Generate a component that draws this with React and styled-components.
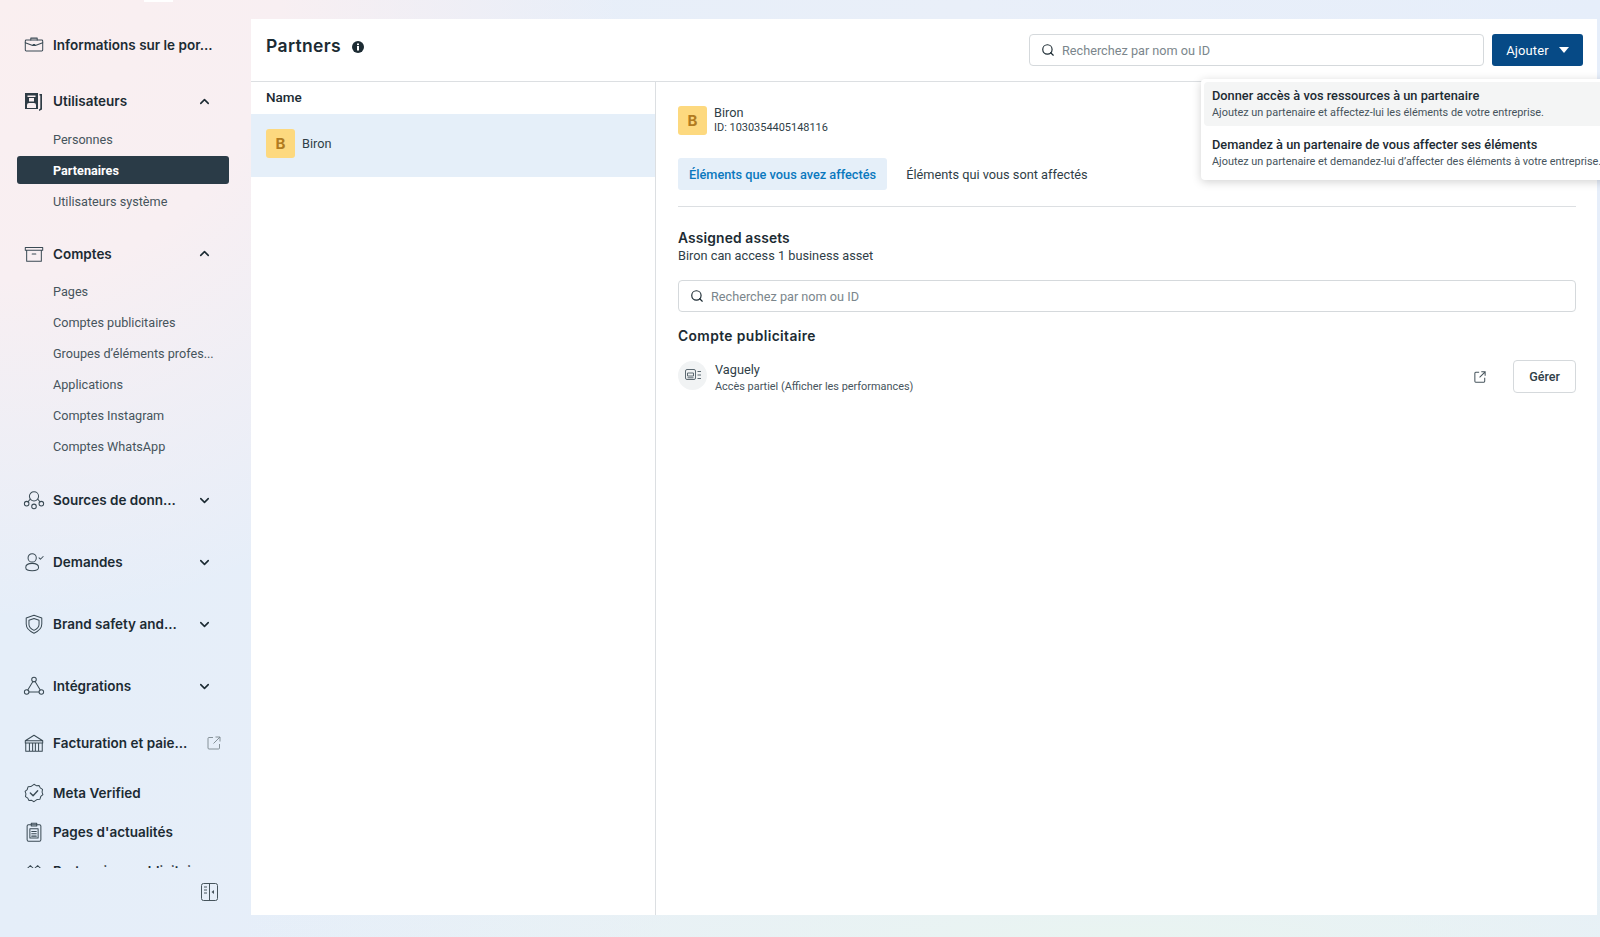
import styled, { createGlobalStyle } from "styled-components";
import { ChevronUp, ChevronDown, Search } from "lucide-react";

const GlobalStyle = createGlobalStyle`
  html, body {
    margin: 0;
    height: 100%;
    overflow: hidden;
  }
  body {
    font-family: Roboto, "Liberation Sans", sans-serif;
    color: #1c2b33;
  }
  * {
    box-sizing: border-box;
  }
`;

const Page = styled.div`
  position: relative;
  display: flex;
  width: 100vw;
  height: 100vh;
  padding: 19px 3px 22px 0;
  background:
    radial-gradient(900px 120px at 70% 100%, #e9f4f1 0%, rgba(233, 244, 241, 0) 100%),
    radial-gradient(620px 620px at 0% 0%, #faeff0 0%, #f8eff2 45%, rgba(248, 239, 242, 0) 100%),
    linear-gradient(90deg, #e5eef9 0%, #e9eff9 60%, #e6eefa 100%);
  background-color: #e5eef9;
`;

const TopTab = styled.div`
  position: absolute;
  top: 0;
  left: 144px;
  width: 29px;
  height: 2px;
  background: #fff;
`;

const Sidebar = styled.aside`
  width: 251px;
  margin: -19px 0 -22px;
  flex-shrink: 0;
  display: flex;
  flex-direction: column;
`;

const NavScroll = styled.nav`
  height: 868px;
  overflow: hidden;
  padding-top: 30px;
`;

const NavRow = styled.div`
  display: flex;
  align-items: center;
  height: 30px;
  margin-top: ${p => p.$top || 0}px;
  padding: 0 30px 0 22px;
`;

const NavIcon = styled.span`
  width: 24px;
  height: 24px;
  margin-right: 7px;
  flex-shrink: 0;
  display: flex;
  align-items: center;
  justify-content: center;
  color: #3a4a54;
`;

const NavLabel = styled.span`
  flex: 1;
  font-family: Inter, sans-serif;
  font-size: 13.5px;
  font-weight: 600;
  color: #1c2b33;
  white-space: nowrap;
`;

const NavEnd = styled.span`
  display: flex;
  align-items: center;
  color: #1c2b33;
  margin-right: ${p => p.$shift || 0}px;
`;

const SubList = styled.div`
  padding-top: 7.5px;
`;

const SubRow = styled.div`
  height: 31px;
  padding: 1.5px 22px 1.5px 17px;
`;

const SubItem = styled.div`
  height: 28px;
  display: flex;
  align-items: center;
  padding-left: 36px;
  font-size: 12.65px;
  white-space: nowrap;
  border-radius: 3px;
  color: ${p => (p.$active ? "#fff" : "#46545c")};
  font-weight: ${p => (p.$active ? 700 : 400)};
  background: ${p => (p.$active ? "#2a3b47" : "transparent")};
`;

const SidebarFoot = styled.div`
  display: flex;
  justify-content: flex-end;
  padding: 15px 33px 0 0;
`;

const Main = styled.main`
  flex: 1;
  display: flex;
  flex-direction: column;
  background: #fff;
  min-width: 0;
`;

const Header = styled.header`
  position: relative;
  height: 63px;
  flex-shrink: 0;
  display: flex;
  align-items: flex-start;
  padding: 15px 14px 0 15px;
  border-bottom: 1px solid #dcdfe2;
`;

const Title = styled.h1`
  margin: 0;
  display: flex;
  align-items: center;
  gap: 11px;
  height: 23px;
  font-family: Inter, sans-serif;
  font-size: 17.5px;
  font-weight: 600;
  letter-spacing: 0.35px;
  color: #1c2b33;
`;

const InfoBadge = styled.span`
  display: flex;
  margin-top: 2px;
`;

const SearchBox = styled.div`
  display: flex;
  align-items: center;
  gap: 7px;
  height: 32px;
  padding: 0 11px;
  border: 1px solid #d5d9dc;
  border-radius: 4px;
  background: #fff;
  font-size: 12.7px;
  color: #7b868c;
  ${p => p.$wide && "width: 100%;"}
  ${p => p.$head && "width: 455px; margin: 0 8px 0 auto;"}
`;

const AddButton = styled.button`
  width: 91px;
  height: 32px;
  border: 0;
  border-radius: 3px;
  background: #064a86;
  color: #fff;
  font-family: Roboto, sans-serif;
  font-size: 13px;
  letter-spacing: 0.1px;
  display: flex;
  align-items: center;
  justify-content: center;
  gap: 10px;
`;

const Caret = styled.span`
  width: 0;
  height: 0;
  border-left: 5px solid transparent;
  border-right: 5px solid transparent;
  border-top: 6px solid #fff;
`;

const Dropdown = styled.div`
  position: absolute;
  top: 60px;
  left: 950px;
  width: 420px;
  height: 101px;
  padding-top: 3px;
  background: #fff;
  border-radius: 4px;
  box-shadow: 0 2px 10px rgba(0, 0, 0, 0.18);
  z-index: 5;
`;

const MenuItem = styled.div`
  height: 44px;
  margin-bottom: 5px;
  padding: 5px 0 0 8px;
  margin-left: 3px;
  border-radius: 4px;
  background: ${p => (p.$hover ? "#f4f5f5" : "transparent")};
`;

const MenuTitle = styled.div`
  font-size: 12.8px;
  font-weight: 500;
  line-height: 17px;
  color: #1c2b33;
  white-space: nowrap;
`;

const MenuText = styled.div`
  font-size: 10.9px;
  line-height: 18px;
  color: #46545c;
  white-space: nowrap;
`;

const Body = styled.div`
  flex: 1;
  display: flex;
  min-height: 0;
`;

const ListPane = styled.section`
  width: 405px;
  flex-shrink: 0;
  border-right: 1px solid #dcdfe2;
`;

const ListHead = styled.div`
  height: 32px;
  display: flex;
  align-items: center;
  padding: 0 0 2px 15px;
  font-size: 13.5px;
  font-weight: 500;
  color: #1c2b33;
`;

const ListRow = styled.div`
  height: 63px;
  display: flex;
  align-items: center;
  gap: 7px;
  padding: 0 0 4px 15px;
  background: #e5eff9;
  font-size: 12.75px;
  color: #2f3e47;
`;

const Avatar = styled.div`
  width: 29px;
  height: 29px;
  flex-shrink: 0;
  border-radius: 3px;
  display: flex;
  align-items: center;
  justify-content: center;
  background: #fdd97f;
  color: #b17b20;
  font-family: Inter, sans-serif;
  font-size: 15px;
  font-weight: 700;
`;

const Detail = styled.section`
  flex: 1;
  min-width: 0;
  padding: 24px 21px 0 22px;
`;

const PartnerHead = styled.div`
  display: flex;
  align-items: center;
  gap: 7px;
  margin-top: -1px;
`;

const Stack = styled.div`
  display: flex;
  flex-direction: column;
  padding-top: ${p => p.$drop || 0}px;
`;

const PartnerName = styled.div`
  font-size: 12.75px;
  line-height: 16px;
  color: #2f3e47;
`;

const AssetName = styled(PartnerName)`
  line-height: 17px;
`;

const PartnerId = styled.div`
  font-size: 10.95px;
  line-height: 14px;
  color: #2f3e47;
`;

const Tabs = styled.div`
  display: flex;
  align-items: center;
  gap: 8px;
  margin-top: 23px;
  padding-bottom: 16px;
  border-bottom: 1px solid #dcdfe2;
`;

const Tab = styled.div`
  height: 32px;
  display: flex;
  align-items: center;
  padding: 0 11px;
  border-radius: 3px;
  font-size: 12.75px;
  font-weight: ${p => (p.$active ? 500 : 400)};
  color: ${p => (p.$active ? "#0a78be" : "#2f3e47")};
  background: ${p => (p.$active ? "#e5eff9" : "transparent")};
`;

const SectionTitle = styled.h2`
  margin: ${p => p.$top}px 0 0;
  font-family: Inter, sans-serif;
  font-size: 13.8px;
  line-height: 18px;
  font-weight: 600;
  letter-spacing: ${p => p.$spacing}px;
  color: #1c2b33;
`;

const SectionText = styled.div`
  margin-bottom: 15px;
  font-size: 12.75px;
  line-height: 18px;
  color: #2f3e47;
`;

const AssetRow = styled.div`
  display: flex;
  align-items: center;
  gap: 8px;
  height: 33px;
  margin-top: 15px;
`;

const AssetIcon = styled.div`
  width: 29px;
  height: 29px;
  flex-shrink: 0;
  margin-top: -3px;
  border-radius: 50%;
  display: flex;
  align-items: center;
  justify-content: center;
  background: #f1f3f4;
  color: #5d6a72;
`;

const AssetAccess = styled.div`
  font-size: 10.9px;
  line-height: 17px;
  color: #46545c;
`;

const AssetActions = styled.div`
  margin-left: auto;
  display: flex;
  align-items: center;
  gap: 27px;
  color: #46545c;
`;

const ManageButton = styled.button`
  width: 63px;
  height: 33px;
  border: 1px solid #d5d9dc;
  border-radius: 4px;
  background: #fff;
  font-family: Roboto, sans-serif;
  font-size: 12.5px;
  font-weight: 500;
  color: #2f3e47;
`;

const Line = ({ size = 22, children }) => (
  <svg width={size} height={size} viewBox="0 0 24 24" fill="none" stroke="currentColor" strokeWidth="1.1" strokeLinejoin="round" strokeLinecap="round">
    {children}
  </svg>
);

const BriefcaseIcon = () => (
  <Line>
    <rect x="2.5" y="6.5" width="19" height="12" rx="1" />
    <path d="M8.5 6.5V4.5h7v2M2.5 9.5l8 3h3l8-3M11 11.5h2" />
  </Line>
);

const UsersIcon = () => (
  <svg width="22" height="24" viewBox="0 0 22 24" fill="#2f3c45">
    <path d="M2 4h13v16H2zM4.500 6.500v1.500h8V6.500zM6 9v3.500h5V9zM4 19h9v-3a2 2 0 0 0-2-2H6a2 2 0 0 0-2 2z" fillRule="evenodd" />
    <path d="M16.500 5H19v15.500L16 22v-1.600l1.300-.8V6.500h-.8z" />
  </svg>
);

const ArchiveIcon = () => (
  <Line>
    <path d="M2.5 5h19v3h-19zM4 8v12h16V8M10 12h4" />
  </Line>
);

const SourcesIcon = () => (
  <Line>
    <circle cx="12" cy="8" r="5" />
    <circle cx="4" cy="16" r="2.500" />
    <circle cx="12" cy="19" r="2.500" />
    <circle cx="20" cy="16" r="2.500" />
    <path d="M7.500 11.500L5.500 14M16.500 11.500L18.500 14" />
  </Line>
);

const RequestIcon = () => (
  <Line>
    <circle cx="10" cy="7.5" r="4.5" />
    <path d="M3 18c0-3 2.5-4.5 7-4.5s7 1.5 7 4.5-2.5 3.5-7 3.5-7-.5-7-3.5zM17.5 7.5l1.5 1.5 3-3" />
  </Line>
);

const ShieldIcon = () => (
  <Line>
    <path d="M12 2.5l8.5 3v6.5c0 5-4 8-8.5 10-4.500-2-8.500-5-8.500-10V5.500z" />
    <path d="M12 6l5.500 2v4.500c0 3-2.500 5-5.500 6.500-3-1.500-5.500-3.500-5.500-6.500V8z" />
  </Line>
);

const GraphIcon = () => (
  <Line>
    <circle cx="12" cy="5" r="2.500" />
    <circle cx="4" cy="18.500" r="2.500" />
    <circle cx="20" cy="18.500" r="2.500" />
    <path d="M10.800 7.200L5.200 16.300M13.200 7.200l5.600 9.100M6.500 18.500h11" />
  </Line>
);

const BankIcon = () => (
  <Line>
    <path d="M2.500 9.500L12 3.500l9.500 6zM3.500 12h17M3 21h18V12M3 12v9M7 12v9M10.500 12v9M13.500 12v9M17 12v9M2.500 9.500v2.500h19V9.500" />
  </Line>
);

const VerifiedIcon = () => (
  <Line>
    <path d="M12 2.500l2.500 1.500 3-.2 1.300 2.600 2.500 1.600-.5 3 .9 2.800-2.300 2-.9 2.900-3 .3L12 21.500l-2.500-1.500-3 .2-1.300-2.600-2.500-1.600.5-3-.9-2.800 2.300-2 .9-2.900 3-.3z" />
    <path d="M8 12l3 3 5-5.500" strokeWidth="1.500" />
  </Line>
);

const ClipboardIcon = () => (
  <Line>
    <rect x="4.500" y="4" width="15" height="18" rx="1.500" />
    <path d="M9 4V2.500h6V4M9 4v1.500h6V4M7.500 8.500h9v10h-9zM9.500 11.500h5M9.500 14h5M9.500 16.500h5" />
  </Line>
);

const MountainIcon = () => (
  <Line>
    <path d="M2 12l6-6 4 4 4-4 6 6M5 15l3-3 4 4 4-4 3 3" />
  </Line>
);

const ExternalIcon = ({ size = 14, color = "currentColor", width = 1.2 }) => (
  <svg width={size} height={size} viewBox="0 0 14 14" fill="none" stroke={color} strokeWidth={width}>
    <path d="M6 1.500H2a1 1 0 0 0-1 1v9.500a1 1 0 0 0 1 1h9.500a1 1 0 0 0 1-1V8M8.500 1h4.500v4.500M13 1L6.500 7.500" />
  </svg>
);

const CollapseIcon = () => (
  <svg width="17" height="18" viewBox="0 0 17 18" fill="none" stroke="#46545c" strokeWidth="1">
    <rect x="0.500" y="0.500" width="16" height="17" rx="2" />
    <path d="M8.500 .5v17M3 4h3M3 7h3M3 10h3" />
    <path d="M13 7v4l-2.500-2z" fill="#46545c" stroke="none" />
  </svg>
);

const InfoIcon = () => (
  <svg width="12" height="12" viewBox="0 0 12 12">
    <circle cx="6" cy="6" r="6" fill="#1c2b33" />
    <rect x="5" y="5" width="2" height="4.500" fill="#fff" />
    <rect x="5" y="2.500" width="2" height="1.600" fill="#fff" />
  </svg>
);

const AdAccountIcon = () => (
  <svg width="16" height="14" viewBox="0 0 16 14" fill="none" stroke="currentColor" strokeWidth="1">
    <rect x="0.500" y="1.500" width="10" height="10" rx="1.500" />
    <path d="M2.500 5h6v3h-6zM2.500 9.800h6M12.500 3.500H16M12.500 7H16M12.500 10.500H16" />
  </svg>
);

const navGroups = [
  { label: "Informations sur le por...", icon: <BriefcaseIcon />, top: 0 },
  {
    label: "Utilisateurs",
    icon: <UsersIcon />,
    top: 26,
    open: true,
    items: ["Personnes", "Partenaires", "Utilisateurs système"],
  },
  {
    label: "Comptes",
    icon: <ArchiveIcon />,
    top: 22,
    open: true,
    items: [
      "Pages",
      "Comptes publicitaires",
      "Groupes d’éléments profes...",
      "Applications",
      "Comptes Instagram",
      "Comptes WhatsApp",
    ],
  },
  { label: "Sources de donn...", icon: <SourcesIcon />, top: 23, closed: true },
  { label: "Demandes", icon: <RequestIcon />, top: 32, closed: true },
  { label: "Brand safety and...", icon: <ShieldIcon />, top: 32, closed: true },
  { label: "Intégrations", icon: <GraphIcon />, top: 32, closed: true },
  { label: "Facturation et paie...", icon: <BankIcon />, top: 27, external: true },
  { label: "Meta Verified", icon: <VerifiedIcon />, top: 20 },
  { label: "Pages d'actualités", icon: <ClipboardIcon />, top: 9 },
  { label: "Partenaires publicitaires", icon: <MountainIcon />, top: 9 },
];

function App() {
  return (
    <>
      <GlobalStyle />
      <Page>
        <TopTab />
        <Sidebar>
          <NavScroll>
            {navGroups.map(group => (
              <div key={group.label}>
                <NavRow $top={group.top}>
                  <NavIcon>{group.icon}</NavIcon>
                  <NavLabel>{group.label}</NavLabel>
                  {group.open && (
                    <NavEnd $shift={9}><ChevronUp size={15} strokeWidth={2.5} /></NavEnd>
                  )}
                  {group.closed && (
                    <NavEnd $shift={9}><ChevronDown size={15} strokeWidth={2.5} /></NavEnd>
                  )}
                  {group.external && (
                    <NavEnd><ExternalIcon color="#7b868c" width={0.9} /></NavEnd>
                  )}
                </NavRow>
                {group.items && (
                  <SubList>
                    {group.items.map(item => (
                      <SubRow key={item}>
                        <SubItem $active={item === "Partenaires"}>{item}</SubItem>
                      </SubRow>
                    ))}
                  </SubList>
                )}
              </div>
            ))}
          </NavScroll>
          <SidebarFoot>
            <CollapseIcon />
          </SidebarFoot>
        </Sidebar>
        <Main>
          <Header>
            <Title>
              Partners
              <InfoBadge><InfoIcon /></InfoBadge>
            </Title>
            <SearchBox $head>
              <Search size={14} color="#1c2b33" />
              Recherchez par nom ou ID
            </SearchBox>
            <AddButton>
              Ajouter
              <Caret />
            </AddButton>
            <Dropdown>
              <MenuItem $hover>
                <MenuTitle>Donner accès à vos ressources à un partenaire</MenuTitle>
                <MenuText>Ajoutez un partenaire et affectez-lui les éléments de votre entreprise.</MenuText>
              </MenuItem>
              <MenuItem>
                <MenuTitle>Demandez à un partenaire de vous affecter ses éléments</MenuTitle>
                <MenuText>Ajoutez un partenaire et demandez-lui d’affecter des éléments à votre entreprise.</MenuText>
              </MenuItem>
            </Dropdown>
          </Header>
          <Body>
            <ListPane>
              <ListHead>Name</ListHead>
              <ListRow>
                <Avatar>B</Avatar>
                Biron
              </ListRow>
            </ListPane>
            <Detail>
              <PartnerHead>
                <Avatar>B</Avatar>
                <Stack>
                  <PartnerName>Biron</PartnerName>
                  <PartnerId>ID: 1030354405148116</PartnerId>
                </Stack>
              </PartnerHead>
              <Tabs>
                <Tab $active>Éléments que vous avez affectés</Tab>
                <Tab>Éléments qui vous sont affectés</Tab>
              </Tabs>
              <SectionTitle $top={22} $spacing={0.15}>Assigned assets</SectionTitle>
              <SectionText>Biron can access 1 business asset</SectionText>
              <SearchBox $wide>
                <Search size={14} color="#1c2b33" />
                Recherchez par nom ou ID
              </SearchBox>
              <SectionTitle $top={15} $spacing={0.4}>Compte publicitaire</SectionTitle>
              <AssetRow>
                <AssetIcon><AdAccountIcon /></AssetIcon>
                <Stack $drop={2}>
                  <AssetName>Vaguely</AssetName>
                  <AssetAccess>Accès partiel (Afficher les performances)</AssetAccess>
                </Stack>
                <AssetActions>
                  <ExternalIcon size={12} />
                  <ManageButton>Gérer</ManageButton>
                </AssetActions>
              </AssetRow>
            </Detail>
          </Body>
        </Main>
      </Page>
    </>
  );
}

export default App;
